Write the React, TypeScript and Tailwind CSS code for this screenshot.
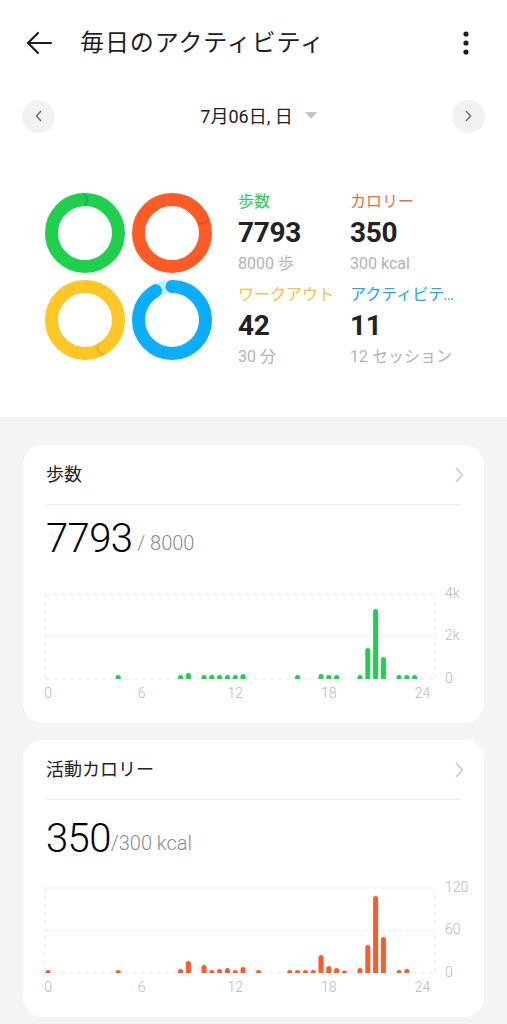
import React from 'react'

const JP = "font-['Roboto','Noto_Sans_CJK_JP',sans-serif]"

const GREEN = '#1fd04d'
const ORANGE = '#ff5b27'
const YELLOW = '#ffc726'
const BLUE = '#0badfe'

// [slot (half hour), bar height px]
const STEPS: [number, number][] = [
  [9, 4], [17, 4], [18, 6], [20, 4], [21, 4], [22, 4], [23, 4], [24, 4], [25, 5],
  [32, 4], [35, 5], [36, 4], [37, 4], [40, 4], [41, 31], [42, 70], [43, 22],
  [45, 4], [46, 4], [47, 4],
]

const CALORIES: [number, number][] = [
  [0, 3], [9, 3], [17, 4], [18, 12], [20, 8], [21, 3], [22, 4], [23, 5], [24, 3],
  [25, 6], [27, 3], [31, 3], [32, 3], [33, 3], [34, 3], [35, 18], [36, 7], [37, 5],
  [38, 2.5], [40, 5], [41, 28], [42, 77], [43, 36], [45, 3], [46, 4],
]

function pt(cx: number, cy: number, r: number, deg: number) {
  const a = (deg * Math.PI) / 180
  return [cx + r * Math.sin(a), cy - r * Math.cos(a)]
}

function arc(cx: number, cy: number, r: number, from: number, to: number) {
  const [x1, y1] = pt(cx, cy, r, from)
  const [x2, y2] = pt(cx, cy, r, to)
  const large = to - from > 180 ? 1 : 0
  return `M${x1} ${y1} A${r} ${r} 0 ${large} 1 ${x2} ${y2}`
}

function Ring({ cx, cy, color, track, pct }: { cx: number; cy: number; color: string; track: string; pct: number }) {
  const r = 33.5
  const sw = 13
  const end = (pct % 1) * 360
  if (pct < 0.95) {
    const c = 2 * Math.PI * r
    return (
      <g>
        <circle cx={cx} cy={cy} r={r} fill="none" stroke={track} strokeWidth={sw} />
        <circle
          cx={cx}
          cy={cy}
          r={r}
          fill="none"
          stroke={color}
          strokeWidth={sw}
          strokeLinecap="round"
          strokeDasharray={`${c * pct} ${c}`}
          transform={`rotate(-90 ${cx} ${cy})`}
        />
      </g>
    )
  }
  const [sx, sy] = pt(cx, cy, r, end + 3)
  const [ex, ey] = pt(cx, cy, r, end)
  return (
    <g>
      <circle cx={cx} cy={cy} r={r} fill="none" stroke={color} strokeWidth={sw} />
      <circle cx={sx} cy={sy} r={6.5} fill="rgba(0,0,0,0.16)" filter="url(#capblur)" />
      <path d={arc(cx, cy, r, end - 40, end)} fill="none" stroke={color} strokeWidth={sw} />
      <circle cx={ex} cy={ey} r={6.5} fill={color} />
    </g>
  )
}

function Rings() {
  return (
    <svg width="172" height="172" viewBox="0 0 172 172" className="shrink-0">
      <defs>
        <filter id="capblur" x="-50%" y="-50%" width="200%" height="200%">
          <feGaussianBlur stdDeviation="0.9" />
        </filter>
      </defs>
      <Ring cx={42} cy={42} color={GREEN} track="#c9f3d4" pct={7793 / 8000} />
      <Ring cx={129} cy={42} color={ORANGE} track="#ffd9cc" pct={350 / 300} />
      <Ring cx={42} cy={129} color={YELLOW} track="#fff0c4" pct={42 / 30} />
      <Ring cx={129} cy={129} color={BLUE} track="#c8ecff" pct={11 / 12} />
    </svg>
  )
}

function Stat({ label, color, value, sub }: { label: string; color: string; value: string; sub: string }) {
  return (
    <div className="flex flex-col min-w-0">
      <div className={`h-[31px] leading-[31px] text-[16px] truncate ${color}`}>{label}</div>
      <div className="h-[31px] flex items-center text-[28px] font-bold text-[#222] tracking-[-0.3px]">{value}</div>
      <div className="h-[31px] flex items-center text-[16px] text-[#b3b3b3] whitespace-nowrap">{sub}</div>
    </div>
  )
}

function BarChart({ data, color, yLabels }: { data: [number, number][]; color: string; yLabels: string[] }) {
  const gy = [10, 52.5, 95]
  return (
    <svg width="415" height="122" overflow="visible" className="block">
      {gy.map((y) => (
        <line key={y} x1={-1} x2={389} y1={y} y2={y} stroke="#e9e9e9" strokeWidth="1" strokeDasharray="4 4" />
      ))}
      <line x1={-1} x2={-1} y1={10} y2={95} stroke="#e9e9e9" strokeWidth="1" strokeDasharray="4 4" />
      <line x1={389} x2={389} y1={10} y2={95} stroke="#e9e9e9" strokeWidth="1" strokeDasharray="4 4" />
      {data.map(([slot, h]) => {
        const x = 2 + 7.8 * slot - 2.5
        const hh = Math.max(h, 2.5)
        return (
          <path
            key={slot}
            d={`M${x} 95 V${95 - hh + 2.5} A2.5 2.5 0 0 1 ${x + 5} ${95 - hh + 2.5} V95 Z`}
            fill={color}
          />
        )
      })}
      {['0', '6', '12', '18', '24'].map((t, k) => (
        <text
          key={t}
          x={2 + 93.6 * k}
          y={110}
          fill="#b8b8b8"
          fontSize="14"
          fontWeight="300"
          textAnchor="middle"
          dominantBaseline="middle"
          fontFamily="Roboto, sans-serif"
        >
          {t}
        </text>
      ))}
      {yLabels.map((t, i) => (
        <text
          key={t}
          x={399}
          y={gy[i]}
          fill="#b8b8b8"
          fontSize="14"
          fontWeight="300"
          dominantBaseline="middle"
          fontFamily="Roboto, sans-serif"
        >
          {t}
        </text>
      ))}
    </svg>
  )
}

function CardChevron() {
  return (
    <svg width="10" height="18" viewBox="0 0 10 18" fill="none" stroke="#c8c8c8" strokeWidth="1.5">
      <polyline points="2 2 8.5 9 2 16" />
    </svg>
  )
}

function Card({
  title,
  value,
  unit,
  numRow,
  chartGap,
  children,
}: {
  title: string
  value: string
  unit: string
  numRow: string
  chartGap: string
  children: React.ReactNode
}) {
  return (
    <div className="bg-white rounded-[20px] px-[23px] pb-[17px]">
      <div className="h-[59px] flex items-center justify-between">
        <span className="text-[18px] text-[#222]">{title}</span>
        <span className="mr-[-3px]">
          <CardChevron />
        </span>
      </div>
      <div className="h-px bg-[#ececec]" />
      <div className={`${numRow} flex items-center`}>
        <span className="text-[40px] font-light text-black leading-none tracking-[-0.6px]">{value}</span>
        <span className="text-[20px] font-light text-[#8c8c8c] leading-none mt-[8px]">{unit}</span>
      </div>
      <div className={chartGap}>{children}</div>
    </div>
  )
}

export default function App() {
  return (
    <div className={`w-[507px] min-h-[1024px] bg-[#f4f4f4] ${JP}`}>
      <div className="bg-white">
        {/* Header */}
        <div className="h-[86px] flex items-center pl-[26px] pr-[26px]">
          <svg width="27" height="24" viewBox="0 0 27 24" fill="none" stroke="#1e1e1e" strokeWidth="2.2" strokeLinecap="round" strokeLinejoin="round">
            <line x1="2" y1="12" x2="25" y2="12" />
            <polyline points="12 2 2 12 12 22" />
          </svg>
          <h1 className="ml-[27px] flex-1 text-[24px] text-[#1e1e1e] tracking-[0.9px]">毎日のアクティビティ</h1>
          <svg width="6" height="24" viewBox="0 0 6 24" fill="#1e1e1e" className="mr-[12px]">
            <circle cx="3" cy="3" r="2.6" />
            <circle cx="3" cy="12" r="2.6" />
            <circle cx="3" cy="21" r="2.6" />
          </svg>
        </div>

        {/* Date row */}
        <div className="h-[60px] flex items-center justify-between px-[22px]">
          <button className="w-[33px] h-[33px] rounded-full bg-[#f2f2f2] flex items-center justify-center">
            <svg width="8" height="12" viewBox="0 0 8 12" fill="none" stroke="#707070" strokeWidth="1.5">
              <polyline points="6 1 1.5 6 6 11" />
            </svg>
          </button>
          <div className="flex items-center gap-[12px] ml-[10px]">
            <span className="text-[18px] text-[#222]">7月06日, 日</span>
            <svg width="12" height="8" viewBox="0 0 12 8">
              <polygon points="0 0 12 0 6 7" fill="#c6c6c6" />
            </svg>
          </div>
          <button className="w-[33px] h-[33px] rounded-full bg-[#f2f2f2] flex items-center justify-center">
            <svg width="8" height="12" viewBox="0 0 8 12" fill="none" stroke="#707070" strokeWidth="1.5">
              <polyline points="2 1 6.5 6 2 11" />
            </svg>
          </button>
        </div>

        {/* Summary */}
        <div className="flex items-start pt-[40px] pb-[45px] pl-[43px]">
          <div className="mt-[5px]">
            <Rings />
          </div>
          <div className="ml-[23px] grid grid-cols-[112px_108px]">
            <Stat label="歩数" color="text-[#2fc85a]" value="7793" sub="8000 歩" />
            <Stat label="カロリー" color="text-[#f26b43]" value="350" sub="300 kcal" />
            <Stat label="ワークアウト" color="text-[#f6c33a]" value="42" sub="30 分" />
            <Stat label="アクティビティ" color="text-[#22a9e6]" value="11" sub="12 セッション" />
          </div>
        </div>
      </div>

      {/* Cards */}
      <div className="px-[23px] pt-[28px] flex flex-col gap-[17px]">
        <Card title="歩数" value="7793" unit={'\u00a0/ 8000'} numRow="h-[68px]" chartGap="mt-[11px]">
          <BarChart data={STEPS} color={GREEN} yLabels={['4k', '2k', '0']} />
        </Card>
        <Card title="活動カロリー" value="350" unit="/300 kcal" numRow="h-[78px]" chartGap="mt-0">
          <BarChart data={CALORIES} color={ORANGE} yLabels={['120', '60', '0']} />
        </Card>
      </div>
    </div>
  )
}
